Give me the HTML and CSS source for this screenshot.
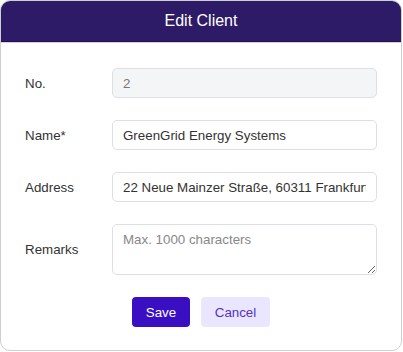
FILE: index.html
```html
<!DOCTYPE html>
<html lang="en">
<head>
  <meta charset="UTF-8">
  <meta name="viewport" content="width=device-width, initial-scale=1.0">
  <title>Edit Client</title>
  <link rel="stylesheet" href="styles.css">
</head>
<body>
  <div class="dialog">
    <div class="dialog-header">Edit Client</div>
    <form class="dialog-body">
      <div class="form-row">
        <label for="no">No.</label>
        <input id="no" type="text" value="2" disabled>
      </div>
      <div class="form-row">
        <label for="name">Name*</label>
        <input id="name" type="text" value="GreenGrid Energy Systems">
      </div>
      <div class="form-row">
        <label for="address">Address</label>
        <input id="address" type="text" value="22 Neue Mainzer Straße, 60311 Frankfurt am Main">
      </div>
      <div class="form-row">
        <label for="remarks">Remarks</label>
        <textarea id="remarks" placeholder="Max. 1000 characters"></textarea>
      </div>
      <div class="actions">
        <button type="button" class="btn btn-primary">Save</button>
        <button type="button" class="btn btn-secondary">Cancel</button>
      </div>
    </form>
  </div>
</body>
</html>
```

FILE: styles.css
```css
body {
  font-family: "Liberation Sans", Arial, sans-serif;
  margin: 0;
  padding: 0;
  background-color: #fff;
  color: #333;
}
.dialog {
  box-sizing: border-box;
  width: 402px;
  height: 351px;
  border: 1px solid #cfcfcf;
  border-radius: 10px;
  overflow: hidden;
  background-color: #fff;
}
.dialog-header {
  height: 40px;
  line-height: 40px;
  background-color: #2e1b68;
  color: #fff;
  text-align: center;
  font-size: 16px;
  border-bottom: 1px solid #231250;
  box-shadow: 0 1px 0 #d4cde8;
}
.dialog-body {
  padding: 26px 24px 0 24px;
  display: flex;
  flex-direction: column;
  gap: 22px;
}
.form-row {
  display: grid;
  grid-template-columns: 87px 1fr;
  align-items: center;
}
.form-row label {
  font-size: 13.33px;
  color: #333;
}
.form-row input,
.form-row textarea {
  box-sizing: border-box;
  width: 100%;
  height: 30px;
  padding: 0 10px;
  border: 1px solid #dcdfe4;
  border-radius: 5px;
  font-family: inherit;
  font-size: 13.33px;
  color: #333;
  background-color: #fff;
}
.form-row input:disabled {
  background-color: #f4f5f7;
  color: #777;
}
.form-row textarea {
  height: 51px;
  padding: 7px 10px;
  resize: vertical;
}
.form-row textarea::placeholder {
  color: #888;
}
.actions {
  display: flex;
  justify-content: center;
  gap: 11px;
}
.btn {
  height: 30px;
  border: none;
  border-radius: 4px;
  font-family: inherit;
  font-size: 13.33px;
  padding: 0;
  cursor: pointer;
}
.btn-primary {
  width: 58px;
  background-color: #3a0fc4;
  color: #fff;
}
.btn-secondary {
  width: 69px;
  background-color: #ebe6ff;
  color: #5530cc;
}
```
